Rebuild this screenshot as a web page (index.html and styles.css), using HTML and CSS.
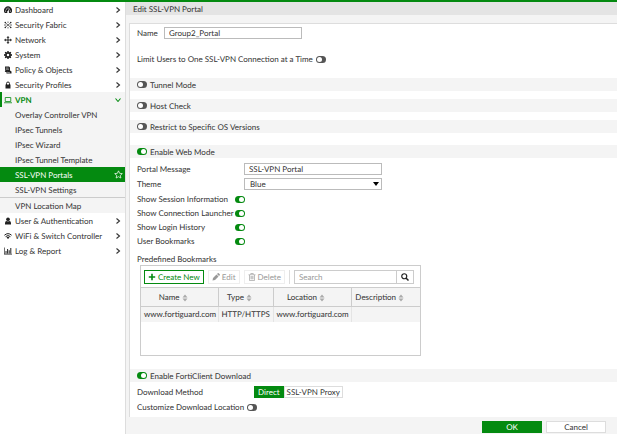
FILE: index.html
```html
<!DOCTYPE html>
<html lang="en">
<head>
  <meta charset="UTF-8">
  <meta name="viewport" content="width=device-width, initial-scale=1.0">
  <title>Edit SSL-VPN Portal</title>
  <link rel="stylesheet" href="styles.css">
</head>

<body>
  <!-- shared icons -->
  <svg class="sprite" aria-hidden="true">
    <symbol id="chevron" viewBox="0 0 8 8"><path d="M2.5 1.5 5.5 4 2.5 6.5" fill="none" stroke="currentColor" stroke-width="1.1"/></symbol>
    <symbol id="sort" viewBox="0 0 6 8"><path d="M.5 3.4 3 .6 5.5 3.4zM.5 4.6 3 7.4 5.5 4.6z" fill="#aaa"/></symbol>
  </svg>

  <div class="page">
    <nav class="sidebar">
      <ul class="menu">
        <li><a href="#" class="menu-item">
          <svg class="icon" viewBox="0 0 16 16"><path d="M1.7 14A8 8 0 1 1 14.3 14z"/><g fill="#fff"><circle cx="3.2" cy="10" r="1.1"/><circle cx="4.7" cy="6" r="1.1"/><circle cx="8" cy="4.2" r="1.1"/><circle cx="12.8" cy="10" r="1.1"/><path d="m10.3 5 1.2.4-2 5.2a2 2 0 1 1-1.3-.4z"/></g></svg>
          <span>Dashboard</span><svg class="chevron"><use href="#chevron"/></svg></a></li>
        <li><a href="#" class="menu-item">
          <svg class="icon" viewBox="0 0 16 16"><path d="m2 3 12 10M2 13 14 3M8 1v3M8 12v3M0 8h4M12 8h4" fill="none" stroke="#222" stroke-width="1.3"/><circle cx="2.5" cy="3" r="1.5"/><circle cx="13.5" cy="3" r="1.5"/><circle cx="2.5" cy="13" r="1.5"/><circle cx="13.5" cy="13" r="1.5"/></svg>
          <span>Security Fabric</span><svg class="chevron"><use href="#chevron"/></svg></a></li>
        <li><a href="#" class="menu-item">
          <svg class="icon" viewBox="0 0 16 16"><path d="m8 0 3 3.500H9V7h3.500V5L16 8l-3.500 3V9H9v3.500h2L8 16l-3-3.500h2V9H3.500v2L0 8l3.500-3v2H7V3.500H5z"/></svg>
          <span>Network</span><svg class="chevron"><use href="#chevron"/></svg></a></li>
        <li><a href="#" class="menu-item">
          <svg class="icon" viewBox="0 0 16 16"><circle cx="8" cy="8" r="4.2" fill="none" stroke="#222" stroke-width="3.4"/><path d="M6.700 0h2.600l.5 3H6.200zM6.700 16h2.600l.5-3H6.200zM0 6.700v2.600l3 .5V6.200zM16 6.700v2.600l-3 .5V6.200zM1.400 3.200l1.800-1.800L6 3.400 3.400 6zM14.600 3.200l-1.800-1.800L10 3.400 12.600 6zM1.400 12.800l1.800 1.800L6 12.600 3.400 10zM14.600 12.800l-1.800 1.800-2.800-2L12.600 10z"/></svg>
          <span>System</span><svg class="chevron"><use href="#chevron"/></svg></a></li>
        <li><a href="#" class="menu-item">
          <svg class="icon" viewBox="0 0 16 16"><path d="M2 1h8l2 2v6l3 2v4H5v-3H1.500l1-2z"/><path d="M4 4h5M4 6.500h6M6 12.500l6 1" stroke="#fff" fill="none"/></svg>
          <span>Policy &amp; Objects</span><svg class="chevron"><use href="#chevron"/></svg></a></li>
        <li><a href="#" class="menu-item">
          <svg class="icon" viewBox="0 0 16 16"><path d="M3 7h10v8H3z"/><path d="M5 8V5a3 3 0 0 1 6 0v3" fill="none" stroke="#222" stroke-width="2"/></svg>
          <span>Security Profiles</span><svg class="chevron"><use href="#chevron"/></svg></a></li>
        <li>
          <a href="#" class="menu-item open">
            <svg class="icon" viewBox="0 0 16 16"><path d="M2.500 3h11v8h-11zM0 13.500h16" fill="none" stroke="currentColor" stroke-width="1.6"/></svg>
            <span>VPN</span><svg class="chevron"><use href="#chevron"/></svg></a>
          <ul class="submenu">
            <li><a href="#">Overlay Controller VPN</a></li>
            <li><a href="#">IPsec Tunnels</a></li>
            <li><a href="#">IPsec Wizard</a></li>
            <li><a href="#">IPsec Tunnel Template</a></li>
            <li><a href="#" class="active"><span>SSL-VPN Portals</span>
              <svg class="star" viewBox="0 0 16 16"><path d="m8 1.500 2 4.400 4.800.5-3.600 3.200 1 4.700L8 11.900l-4.200 2.400 1-4.700L1.200 6.400 6 5.900z" fill="none" stroke="#fff" stroke-width="1.3"/></svg></a></li>
            <li><a href="#">SSL-VPN Settings</a></li>
            <li class="divided"><a href="#">VPN Location Map</a></li>
          </ul>
        </li>
        <li><a href="#" class="menu-item">
          <svg class="icon" viewBox="0 0 16 16"><circle cx="8" cy="4.5" r="3.7"/><path d="M2 15v-3q0-4 3.500-4 2.500 1.500 5 0Q14 8 14 12v3z"/></svg>
          <span>User &amp; Authentication</span><svg class="chevron"><use href="#chevron"/></svg></a></li>
        <li><a href="#" class="menu-item">
          <svg class="icon" viewBox="0 0 16 16"><path d="M.8 6.500Q8 0 15.200 6.500M3.200 9.200Q8 5 12.800 9.200" fill="none" stroke="#222" stroke-width="2"/><path d="M5 10.800q3-2.500 6 0L8 14z"/></svg>
          <span>WiFi &amp; Switch Controller</span><svg class="chevron"><use href="#chevron"/></svg></a></li>
        <li><a href="#" class="menu-item">
          <svg class="icon" viewBox="0 0 16 16"><path d="M0 1h1.300v12.700H16V15H0zM3 8h2v5H3zM6.200 4h2v9h-2zM9.400 6.500h2v6.500h-2zM12.600 2h2v11h-2z"/></svg>
          <span>Log &amp; Report</span><svg class="chevron"><use href="#chevron"/></svg></a></li>
      </ul>
    </nav>

    <main class="main">
      <h1>Edit SSL-VPN Portal</h1>

      <form class="portal-form">
        <div class="panel">
          <div class="row name-row">
            <label for="name">Name</label>
            <input type="text" id="name" class="field" value="Group2_Portal">
          </div>
          <div class="row limit-row">
            <label for="limit">Limit Users to One SSL-VPN Connection at a Time</label>
            <input type="checkbox" id="limit" class="toggle">
          </div>

          <div class="section">
            <input type="checkbox" id="tunnel" class="toggle">
            <label for="tunnel">Tunnel Mode</label>
          </div>
          <div class="section">
            <input type="checkbox" id="host" class="toggle">
            <label for="host">Host Check</label>
          </div>
          <div class="section">
            <input type="checkbox" id="restrict" class="toggle">
            <label for="restrict">Restrict to Specific OS Versions</label>
          </div>

          <div class="section web-mode">
            <input type="checkbox" id="web" class="toggle" checked>
            <label for="web">Enable Web Mode</label>
          </div>
          <div class="row setting">
            <label for="message">Portal Message</label>
            <input type="text" id="message" class="field" value="SSL-VPN Portal">
          </div>
          <div class="row setting">
            <label for="theme">Theme</label>
            <div class="field select">
              <select id="theme"><option>Blue</option></select>
              <svg viewBox="0 0 6 4"><path d="M0 0h6L3 4z"/></svg>
            </div>
          </div>
          <div class="switches">
            <div class="row"><label for="session">Show Session Information</label><input type="checkbox" id="session" class="toggle" checked></div>
            <div class="row"><label for="launcher">Show Connection Launcher</label><input type="checkbox" id="launcher" class="toggle" checked></div>
            <div class="row"><label for="history">Show Login History</label><input type="checkbox" id="history" class="toggle" checked></div>
            <div class="row"><label for="bookmarks">User Bookmarks</label><input type="checkbox" id="bookmarks" class="toggle" checked></div>
          </div>

          <h2>Predefined Bookmarks</h2>
          <div class="bookmarks">
            <div class="toolbar">
              <button type="button" class="tool create">
                <svg viewBox="0 0 10 10"><path d="M4 1h2v3h3v2H6v3H4V6H1V4h3z"/></svg>Create New</button>
              <button type="button" class="tool" disabled>
                <svg viewBox="0 0 16 16"><path d="m1 15 1-5 7-7 4 4-7 7zM10 2l1.500-1.500q1-.8 2 0l2 2q.8 1 0 2L14 6z"/></svg>Edit</button>
              <button type="button" class="tool" disabled>
                <svg viewBox="0 0 16 16"><path d="M1 3.500h14M5.500 3V1h5v2M3 4v11h10V4M6 6v6.500M8 6v6.500M10 6v6.500" fill="none" stroke="currentColor" stroke-width="1.3"/></svg>Delete</button>
              <div class="search">
                <input type="text" placeholder="Search" aria-label="Search">
                <button type="button" aria-label="Search">
                  <svg viewBox="0 0 16 16"><path d="m10 10 5 5" stroke="#222" stroke-width="3"/><circle cx="6.5" cy="6.5" r="5" fill="none" stroke="#222" stroke-width="2.4"/></svg>
                </button>
              </div>
            </div>
            <table>
              <thead>
                <tr>
                  <th class="col-name">Name <svg><use href="#sort"/></svg></th>
                  <th class="col-type">Type <svg><use href="#sort"/></svg></th>
                  <th class="col-location">Location <svg><use href="#sort"/></svg></th>
                  <th>Description <svg><use href="#sort"/></svg></th>
                </tr>
              </thead>
              <tbody>
                <tr><td>www.fortiguard.com</td><td>HTTP/HTTPS</td><td>www.fortiguard.com</td><td></td></tr>
              </tbody>
            </table>
          </div>

          <div class="section download">
            <input type="checkbox" id="forticlient" class="toggle" checked>
            <label for="forticlient">Enable FortiClient Download</label>
          </div>
          <div class="row method">
            <span id="method-label">Download Method</span>
            <div class="segmented" role="group" aria-labelledby="method-label">
              <button type="button" class="selected">Direct</button>
              <button type="button">SSL-VPN Proxy</button>
            </div>
          </div>
          <div class="row customize">
            <label for="customize">Customize Download Location</label>
            <input type="checkbox" id="customize" class="toggle">
          </div>
        </div>

        <div class="actions">
          <button type="submit" class="btn btn-ok">OK</button>
          <button type="button" class="btn">Cancel</button>
        </div>
      </form>
    </main>
  </div>
</body>
</html>
```

FILE: styles.css
```css
* {
  box-sizing: border-box;
}

body {
  margin: 0;
  font-family: Lato, "Liberation Sans", sans-serif;
  font-size: 8px;
  line-height: 12px;
  text-rendering: geometricPrecision;
  color: #333;
  background: #f4f4f4;
}

input, select, button {
  font: inherit;
  color: inherit;
  margin: 0;
  text-rendering: inherit;
}

label, button {
  white-space: nowrap;
}

ul {
  list-style: none;
  margin: 0;
  padding: 0;
}

.sprite {
  display: none;
}

.page {
  display: flex;
  min-height: 100vh;
  border-top: 2px solid #048a10;
}

/* sidebar */
.sidebar {
  flex: none;
  width: 125px;
  background: #fff;
}

.sidebar a {
  display: flex;
  align-items: center;
  height: 15px;
  color: #333;
  text-decoration: none;
}

.menu-item {
  padding: 0 3px 0 4px;
}

.menu-item span {
  flex: 1;
}

.icon {
  width: 8px;
  height: 8px;
  margin-right: 3px;
  fill: #222;
}

.chevron {
  width: 8px;
  height: 8px;
}

.sidebar .open {
  padding-left: 2px;
  border-left: 2px solid #048a10;
  background: #f4f4f4;
  color: #048a10;
  font-weight: bold;
}

.open .chevron {
  transform: rotate(90deg);
}

.submenu {
  background: #f4f4f4;
}

.submenu a {
  justify-content: space-between;
  padding: 0 2px 0 15px;
}

.sidebar .active {
  background: #048a10;
  color: #fff;
}

.divided {
  border-top: 1px solid #ccc;
}

.star {
  width: 9px;
  height: 9px;
}

/* main */
.main {
  flex: 1;
  min-width: 0;
  display: flex;
  flex-direction: column;
  border-left: 1px solid #ddd;
}

h1 {
  margin: 0 0 8px;
  padding: 1px 7px 0;
  background: #e4e4e4;
  font-size: 8px;
  font-weight: normal;
}

.portal-form {
  flex: 1;
  display: flex;
  flex-direction: column;
  padding-left: 3px;
}

.panel {
  flex: 1;
  padding: 3px 0 4px;
  background: #fff;
  border-left: 1px solid #ddd;
  border-top: 1px solid #ddd;
}

.row, .section {
  display: flex;
  align-items: center;
  padding-left: 7px;
}

.section {
  height: 13px;
  margin-bottom: 8px;
  gap: 3px;
  background: #f4f4f4;
}

.field {
  width: 138px;
  height: 12px;
  padding: 0 4px;
  border: 1px solid #bbb;
  background: #fff;
}

.toggle {
  appearance: none;
  flex: none;
  display: flex;
  width: 10px;
  height: 7px;
  padding: 1px;
  border-radius: 4px;
  background: #555;
}

.toggle::before {
  content: "";
  width: 5px;
  height: 5px;
  border-radius: 3px;
  background: #fff;
}

.toggle:checked {
  justify-content: flex-end;
  background: #048a10;
}

.name-row label {
  width: 27px;
}

.limit-row {
  gap: 3px;
  margin: 14px 0 13px;
}

.web-mode {
  margin-top: 12px;
  margin-bottom: 5px;
}

.setting {
  margin-bottom: 3px;
}

.setting label {
  width: 107px;
}

.select {
  display: flex;
  align-items: center;
  padding: 0 2px 0 5px;
}

.select select {
  flex: 1;
  appearance: none;
  height: 10px;
  line-height: 10px;
  padding: 0;
  border: none;
  background: none;
}

.select svg {
  width: 6px;
  height: 4px;
}

.switches {
  display: grid;
  row-gap: 2px;
}

.switches label {
  width: 98px;
}

h2 {
  margin: 6px 0 0;
  padding-left: 7px;
  font-size: 8px;
  font-weight: normal;
}

/* bookmark table */
.bookmarks {
  width: 281px;
  min-height: 91px;
  margin-left: 10px;
  border: 1px solid #ccc;
}

.toolbar {
  display: flex;
  align-items: center;
  gap: 4px;
  padding: 4px 6px 3px 3px;
}

.tool {
  display: flex;
  align-items: center;
  gap: 2px;
  height: 14px;
  padding: 0 3px;
  border: 1px solid #eee;
  background: #fff;
  color: #999;
}

.tool svg {
  flex: none;
  width: 8px;
  height: 8px;
  fill: currentColor;
}

.create {
  border-color: #048a10;
  color: #048a10;
}

.search {
  flex: 1;
  min-width: 0;
  display: flex;
  height: 14px;
  padding-left: 4px;
  border-left: 1px solid #ddd;
}

.search input {
  flex: 1;
  min-width: 0;
  padding: 0 4px;
  border: 1px solid #ccc;
}

.search input::placeholder {
  color: #999;
}

.search button {
  display: flex;
  align-items: center;
  justify-content: center;
  width: 17px;
  padding: 0;
  border: 1px solid #ccc;
  border-left: none;
  background: #fff;
}

.search svg {
  width: 8px;
  height: 8px;
}

table {
  width: 100%;
  table-layout: fixed;
  border-collapse: collapse;
  background: #f4f4f4;
}

th {
  height: 19px;
  padding: 0 12px 0 0;
  border: solid #ccc;
  border-width: 1px 0 1px 1px;
  font-weight: normal;
  white-space: nowrap;
}

td {
  height: 15px;
  padding: 0 3px;
  border-left: 1px solid #e4e4e4;
  white-space: nowrap;
}

th:first-child, td:first-child {
  border-left: none;
}

th svg {
  width: 6px;
  height: 8px;
  vertical-align: -2px;
}

.col-name {
  width: 77px;
}

.col-type {
  width: 55px;
}

.col-location {
  width: 78px;
}

.download {
  margin-top: 13px;
  margin-bottom: 4px;
}

.method span {
  width: 117px;
}

.segmented {
  display: flex;
}

.segmented button {
  height: 12px;
  padding: 0 2px;
  border: 1px solid #ddd;
  line-height: 10px;
  background: #fff;
}

.segmented .selected {
  padding: 0 3px;
  border-color: #048a10;
  background: #048a10;
  color: #fff;
}

.customize {
  gap: 3px;
  margin-top: 3px;
}

/* footer */
.actions {
  display: flex;
  justify-content: flex-end;
  gap: 4px;
  padding: 4px 11px 1px 0;
}

.btn {
  width: 60px;
  height: 12px;
  padding: 0;
  border: 1px solid #ddd;
  line-height: 10px;
  background: #fff;
}

.btn-ok {
  border-color: #048a10;
  background: #048a10;
  color: #fff;
}
```
